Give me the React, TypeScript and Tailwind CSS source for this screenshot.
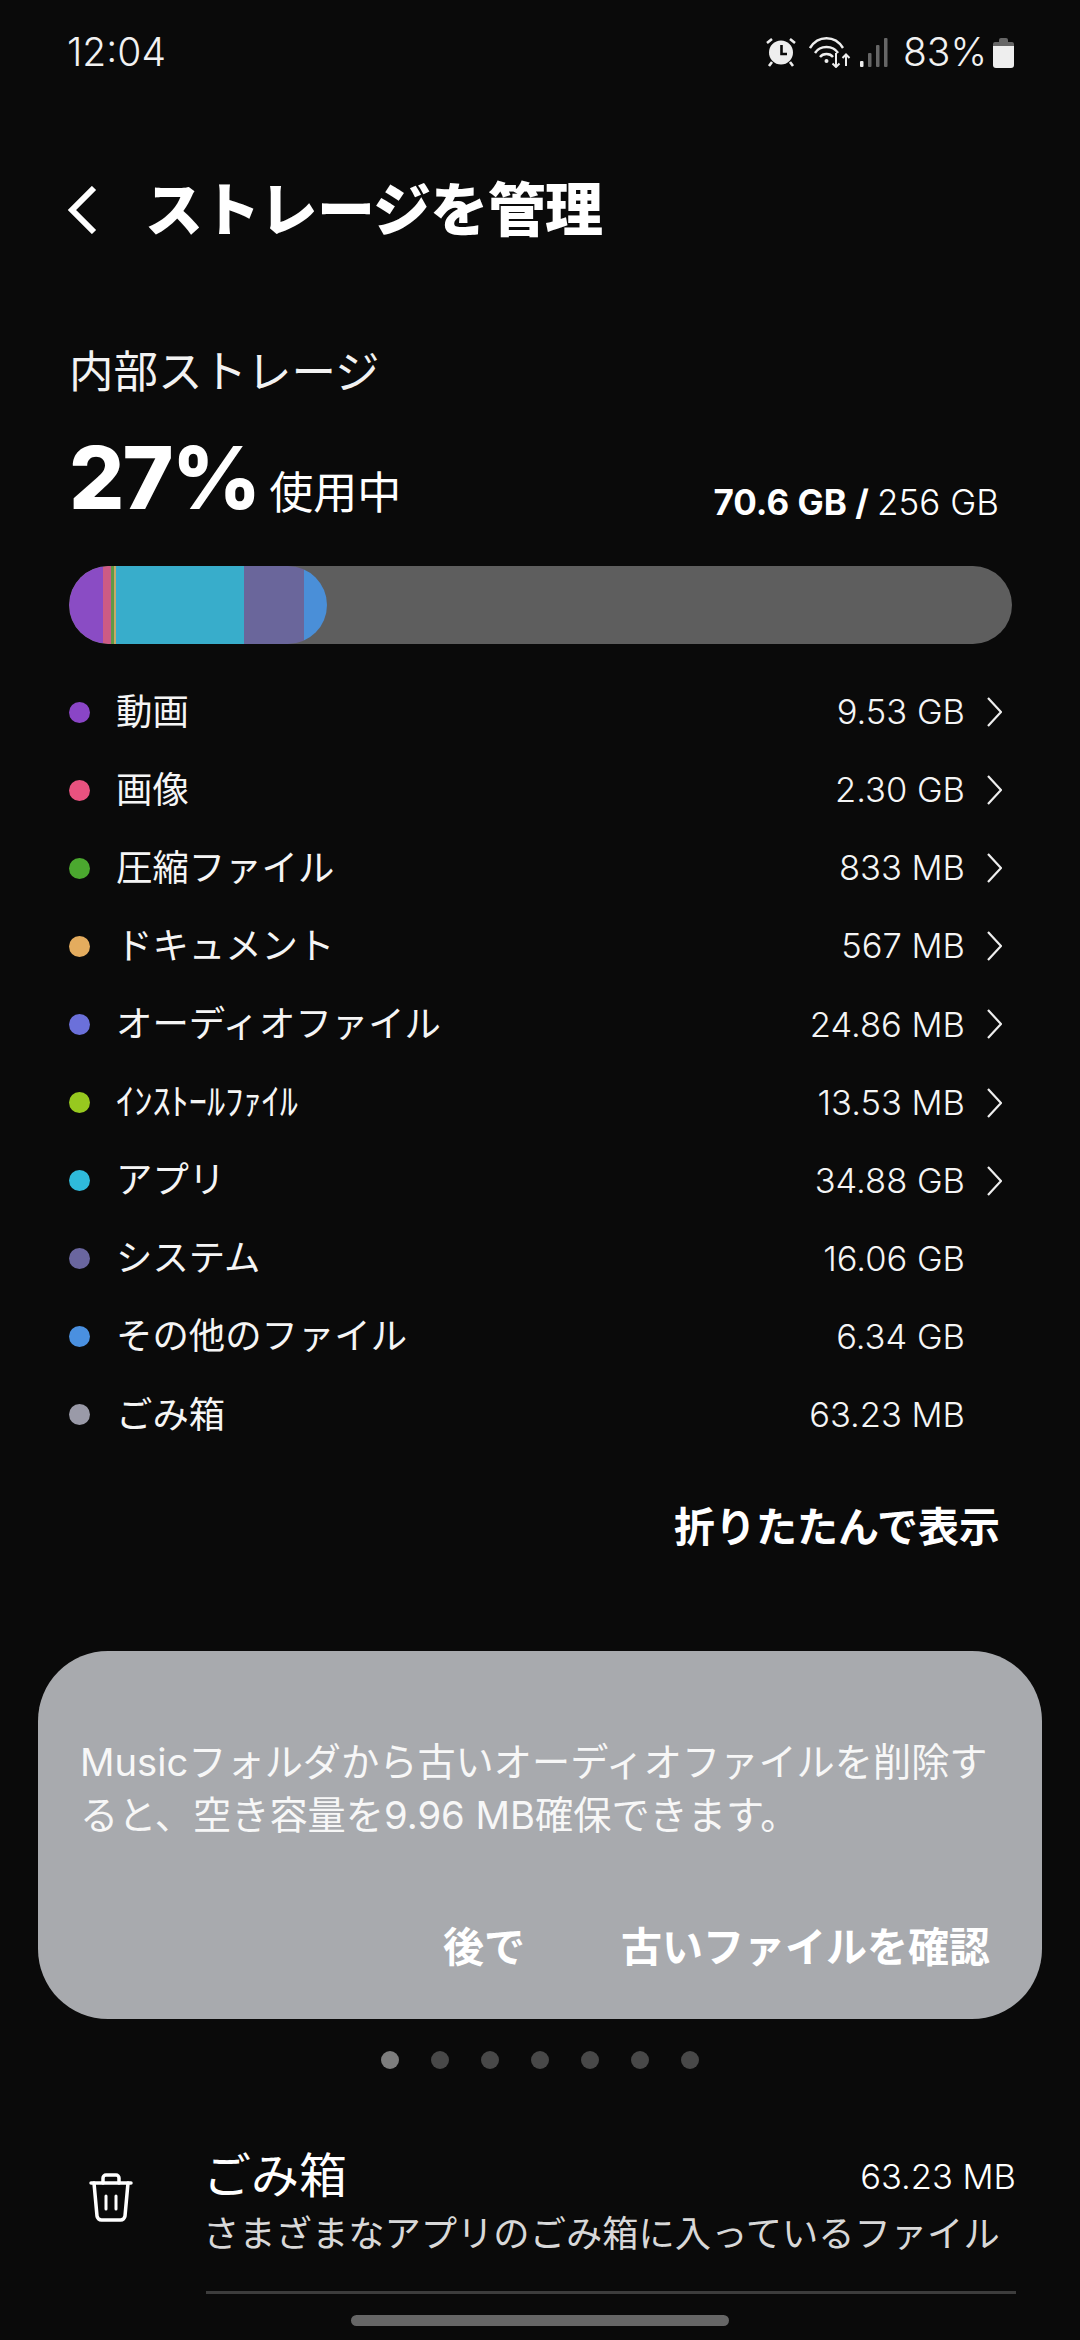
const FONT = "font-['Inter','Noto_Sans_CJK_JP',sans-serif]";

const rows = [
  { name: "動画", size: "9.53 GB", dot: "bg-[#8a45c6]", more: true },
  { name: "画像", size: "2.30 GB", dot: "bg-[#e9527f]", more: true },
  { name: "圧縮ファイル", size: "833 MB", dot: "bg-[#4ba82f]", more: true },
  { name: "ドキュメント", size: "567 MB", dot: "bg-[#e4ac5e]", more: true },
  { name: "オーディオファイル", size: "24.86 MB", dot: "bg-[#6b70da]", more: true },
  { name: "ｲﾝｽﾄｰﾙﾌｧｲﾙ", size: "13.53 MB", dot: "bg-[#97c91f]", more: true },
  { name: "アプリ", size: "34.88 GB", dot: "bg-[#2fbadb]", more: true },
  { name: "システム", size: "16.06 GB", dot: "bg-[#6a669f]", more: false },
  { name: "その他のファイル", size: "6.34 GB", dot: "bg-[#4a90e0]", more: false },
  { name: "ごみ箱", size: "63.23 MB", dot: "bg-[#9a9aa8]", more: false },
];

function StatusBar() {
  return (
    <div className="flex h-[104px] items-center justify-between pl-[67px] pr-[66px] text-[39px] font-light text-[#f2f2f2]">
      <span>12:04</span>
      <div className="flex items-center">
        <svg width="30" height="30" viewBox="0 0 30 30" className="mr-[13px]">
          <circle cx="15" cy="15.5" r="12" fill="#eee" />
          <path d="M15.5 8v9H21" stroke="#0a0a0a" strokeWidth="2.6" fill="none" />
          <path d="M1 6l5-4M29 6l-5-4M6 25l-3 4M24 25l3 4" stroke="#eee" strokeWidth="2.6" />
        </svg>
        <svg width="42" height="31" viewBox="0 0 42 31" className="mr-[9px]" fill="none" stroke="#eee" strokeWidth="2.4">
          <path d="M1 11C9 -2 26 -2 34 11" />
          <path d="M6 16c5-8 18-8 23 0" />
          <path d="M11 20c3-4 10-4 13 0" />
          <circle cx="17.5" cy="24" r="2" fill="#eee" stroke="none" />
          <path d="M27 16v14M23.5 26.5l3.5 3.5 3.5-3.5" strokeWidth="2" />
          <path d="M37 29V18M33.5 21l3.5-3.5 3.5 3.5" strokeWidth="2" />
        </svg>
        <svg width="28" height="29" viewBox="0 0 28 29" className="mr-[15px]">
          <rect x="0" y="23" width="3.5" height="6" rx="1" fill="#eee" />
          <rect x="8" y="15" width="3.5" height="14" rx="1" fill="#666" />
          <rect x="16" y="7" width="3.5" height="22" rx="1" fill="#666" />
          <rect x="24" y="0" width="3.5" height="29" rx="1" fill="#666" />
        </svg>
        <span>83%</span>
        <svg width="21" height="31" viewBox="0 0 21 31" className="ml-[6px]">
          <path d="M6 3a2 2 0 0 1 2-2h5a2 2 0 0 1 2 2v2h4a2 2 0 0 1 2 2v2H0V7a2 2 0 0 1 2-2h4z" fill="#666" />
          <path d="M0 9h21v19a3 3 0 0 1-3 3H3a3 3 0 0 1-3-3z" fill="#eee" />
        </svg>
      </div>
    </div>
  );
}

function StorageBar() {
  return (
    <div className="ml-[69px] mr-[68px] flex h-[78px] overflow-hidden rounded-[39px] bg-[#5e5e5e]">
      <div className="flex h-full w-[258px] overflow-hidden rounded-[39px]">
        <div className="w-[34px] bg-[#8a4cc4]" />
        <div className="w-[8px] bg-[#cd5b85]" />
        <div className="w-[3px] bg-[#5f9a45]" />
        <div className="w-[2px] bg-[#c9a868]" />
        <div className="w-[128px] bg-[#38adcb]" />
        <div className="w-[60px] bg-[#6a669b]" />
        <div className="w-[23px] bg-[#4a8fd8]" />
      </div>
    </div>
  );
}

function Row({ name, size, dot, more }: (typeof rows)[number]) {
  return (
    <div className="flex h-[78.1px] items-center pl-[69px] pr-[78px] text-[36.4px] text-[#f5f5f5]">
      <span className={`h-[21px] w-[21px] rounded-full ${dot}`} />
      <span className="ml-[26px] flex-1">{name}</span>
      <span className="text-[34.5px] font-light">{size}</span>
      <div className="ml-[22px] flex w-[15px] justify-end">
        {more && (
          <svg width="15" height="30" viewBox="0 0 15 30" fill="none" stroke="#eee" strokeWidth="2.2">
            <path d="M1 1l13 14L1 29" />
          </svg>
        )}
      </div>
    </div>
  );
}

export default function App() {
  return (
    <div className={`relative h-[2340px] w-[1080px] overflow-hidden bg-[#0a0a0a] text-white ${FONT}`}>
      <StatusBar />

      <div className="mt-[64px] flex h-[84px] items-center pl-[67px]">
        <svg width="30" height="48" viewBox="0 0 30 48" fill="none" stroke="white" strokeWidth="6">
          <path d="M27 2L5 24l22 22" />
        </svg>
        <h1 className="ml-[48px] text-[58px] font-black tracking-[-0.7px]">ストレージを管理</h1>
      </div>

      <div className="mt-[90px] pl-[69px] text-[44.5px] leading-[60px] text-[#f2f2f2]">内部ストレージ</div>
      <div className="mt-[26px] flex h-[100px] items-end justify-between pl-[69px] pr-[81px]">
        <div className="flex items-baseline">
          <span className="text-[87px] font-extrabold leading-[100px] tracking-[-2px]">27%</span>
          <span className="ml-[10px] text-[44px]">使用中</span>
        </div>
        <div className="text-[35px] leading-[52px]">
          <span className="font-bold">70.6 GB / </span>
          <span className="font-light">256 GB</span>
        </div>
      </div>

      <div className="mt-[38px]">
        <StorageBar />
      </div>

      <div className="mt-[29px]">
        {rows.map((r) => (
          <Row key={r.name} {...r} />
        ))}
      </div>

      <div className="mt-[43px] pr-[80px] text-right text-[41px] font-bold">折りたたんで表示</div>

      <div className="mx-[38px] mt-[93px] flex h-[368px] flex-col rounded-[70px] bg-[#a8aaae] pl-[42px] pr-[36px] pt-[85px]">
        <p className="text-[38.2px] leading-[53px] text-[#f7f7f7]">
          Musicフォルダから古いオーディオファイルを削除すると、空き容量を9.96 MB確保できます。
        </p>
        <div className="mt-[75px] flex justify-end gap-[96px] pr-[16px] text-[41px] font-bold">
          <span>後で</span>
          <span>古いファイルを確認</span>
        </div>
      </div>

      <div className="mt-[32px] flex justify-center gap-[32px]">
        <span className="h-[18px] w-[18px] rounded-full bg-[#7d7d7d]" />
        {[1, 2, 3, 4, 5, 6].map((i) => (
          <span key={i} className="h-[18px] w-[18px] rounded-full bg-[#484848]" />
        ))}
      </div>

      <div className="mt-[77px] flex pl-[89px] pr-[64px]">
        <svg width="44" height="49" viewBox="0 0 44 49" fill="none" stroke="white" strokeWidth="3.5" strokeLinecap="round" className="mt-[26.5px] shrink-0">
          <path d="M2 10h40" />
          <path d="M14 10V5a3 3 0 0 1 3-3h10a3 3 0 0 1 3 3v5" />
          <path d="M5 10l3 33a4.5 4.5 0 0 0 4.5 4h19a4.5 4.5 0 0 0 4.5-4l3-33" />
          <path d="M17 23v13M27 23v13" strokeWidth="3" />
        </svg>
        <div className="ml-[73px] min-w-0 flex-1">
          <div className="flex items-center justify-between">
            <span className="ml-[-3px] text-[48px] leading-[60px]">ごみ箱</span>
            <span className="text-[34.5px] font-light">63.23 MB</span>
          </div>
          <div className="ml-[-3px] mt-[3px] whitespace-nowrap text-[36.3px] leading-[50px] text-[#d8d8d8]">さまざまなアプリのごみ箱に入っているファイル</div>
          <div className="mt-[32px] h-[3px] bg-[#3d3d3d]" />
        </div>
      </div>

      <div className="absolute bottom-[14px] left-[351px] h-[11px] w-[378px] rounded-full bg-[#666]" />
    </div>
  );
}
